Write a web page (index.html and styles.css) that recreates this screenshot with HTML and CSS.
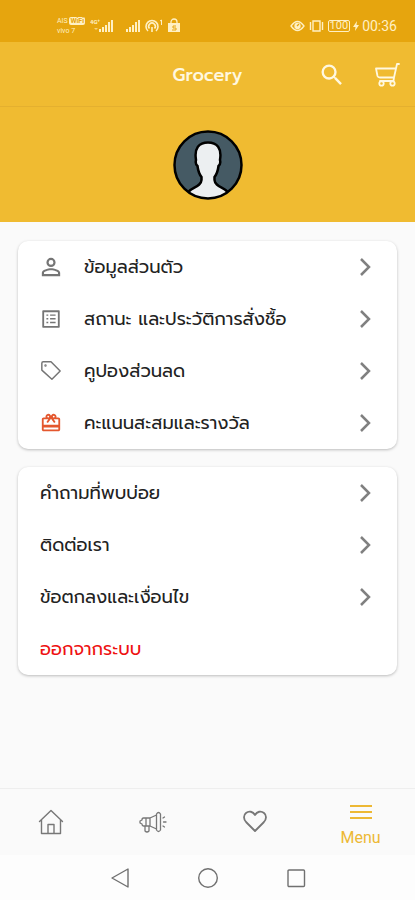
FILE: index.html
```html
<!DOCTYPE html>
<html lang="th">
<head>
<meta charset="utf-8">
<meta name="viewport" content="width=device-width, initial-scale=1">
<title>Grocery</title>
<link rel="stylesheet" href="styles.css">
</head>
<body>
<div class="screen">
  <div class="status">
    <div class="status-group">
      <span class="carrier"><span class="carrier-top">AIS <b class="wifi-tag">WiFi</b></span><span>vivo 7</span></span>
      <svg width="24" height="16" viewBox="0 0 24 16" fill="currentColor"><text x="0" y="6" class="net">4G⁺</text><path d="M4 10l2 2 2-2z" opacity=".6"/><path d="M9 11h2v3H9zM12 9h2v5h-2zM15 7h2v7h-2zM18 4h2v10h-2zM21 2h2v12h-2z"/></svg>
      <svg class="signal" width="16" height="16" viewBox="0 0 16 16" fill="currentColor"><path d="M1 11h2v3H1zM4 9h2v5H4zM7 7h2v7H7zM10 4h2v10h-2zM13 2h2v12h-2z"/></svg>
      <svg width="20" height="16" viewBox="0 0 20 16" fill="none" stroke="currentColor" stroke-width="1.6"><path d="M4 13a6 6 0 1 1 8 0M5.500 10.500a3.300 3.300 0 1 1 5 0M8 9v5"/><path d="M16 3l1.500-1v5" stroke-width="1"/></svg>
      <svg width="14" height="16" viewBox="0 0 14 16" fill="none"><path d="M1 5h12v9H1z" fill="currentColor"/><path d="M4 6V4a3 3 0 0 1 6 0v2" stroke="currentColor" stroke-width="1.300"/><path d="M9 8H6v2h3v2H5" stroke="#e6a50e"/></svg>
    </div>
    <div class="status-group">
      <svg width="15" height="16" viewBox="0 0 15 16" fill="none" stroke="currentColor" stroke-width="1.300"><path d="M1 8q6.500-9 13 0q-6.500 9-13 0z"/><circle cx="7.500" cy="8" r="2.500" fill="currentColor"/><path d="M7 8l2-2" stroke="#e6a50e"/></svg>
      <svg width="17" height="16" viewBox="0 0 17 16" fill="none" stroke="currentColor" stroke-width="1.400"><path d="M5 3h7v10H5zM2.500 4v8M14.500 4v8"/></svg>
      <span class="battery">100</span>
      <svg width="6" height="16" viewBox="0 0 6 16" fill="currentColor"><path d="M4 3L0 9h2.500L2 13l4-6H3.500z"/></svg>
      <span class="clock">00:36</span>
    </div>
  </div>

  <header class="appbar">
    <h1>Grocery</h1>
    <div class="actions">
      <button aria-label="Search"><svg width="28" height="28" viewBox="0 0 24 24" fill="currentColor"><path d="M15.500 14h-.79l-.28-.27A6.470 6.470 0 0 0 16 9.500 6.500 6.500 0 1 0 9.500 16c1.610 0 3.090-.59 4.230-1.570l.27.28v.79l5 4.990L20.490 19zm-6 0a4.500 4.500 0 1 1 0-9 4.500 4.500 0 0 1 0 9z"/></svg></button>
      <button aria-label="Cart"><svg width="28" height="28" viewBox="0 0 28 28" fill="none" stroke="currentColor" stroke-width="1.800" stroke-linecap="round" stroke-linejoin="round"><path d="M26 3h-2l-1 4.500H3L4.500 15Q5 16.500 7 16.500H21L23 7.500M21 16.500l-.5 3.500H7"/><circle cx="8.500" cy="22.500" r="2.200"/><circle cx="19.500" cy="22.500" r="2.200"/></svg></button>
    </div>
  </header>

  <section class="hero">
    <svg width="70" height="70" viewBox="0 0 70 70" role="img" aria-label="Profile"><defs><clipPath id="disc"><circle cx="35" cy="35" r="33"/></clipPath></defs><circle cx="35" cy="35" r="33" fill="#455a64"/><path clip-path="url(#disc)" d="M13 66C15 57 28 58 28.500 50V47C26 44 25 40 24.500 36Q22 34 23 30C21 18 26 12.500 35 12.500S49 18 47 30Q48 34 45.500 36C45 40 44 44 41.500 47V50C42 58 55 57 57 66V72H13z" fill="#eceff1" stroke="#000" stroke-width="2.500"/><circle cx="35" cy="35" r="33.500" fill="none" stroke="#000" stroke-width="2.500"/></svg>
  </section>

  <main class="content">
    <nav class="card" aria-label="Account">
      <a class="row" href="#"><svg class="lead" viewBox="0 0 24 24" fill="currentColor"><path d="M12 5.900a2.100 2.100 0 1 1 0 4.200 2.100 2.100 0 0 1 0-4.200m0 9c2.970 0 6.100 1.460 6.100 2.100v1.100H5.900V17c0-.64 3.130-2.100 6.100-2.100M12 4a4 4 0 1 0 0 8 4 4 0 0 0 0-8zm0 9c-2.670 0-8 1.340-8 4v3h16v-3c0-2.660-5.330-4-8-4z" transform="translate(-3 -3) scale(1.250)"/></svg><span>ข้อมูลส่วนตัว</span><svg class="chev" viewBox="0 0 12 18"><path d="M2 1l8 8-8 8"/></svg></a>
      <a class="row" href="#"><svg class="lead" viewBox="0 0 24 24" fill="currentColor"><path d="M19.500 4.500v15h-15v-15h15m1.100-2H3.400c-.5 0-.9.400-.9.900v17.200c0 .4.400.9.900.9h17.200c.4 0 .9-.5.900-.9V3.400c0-.5-.5-.9-.9-.9zM11 7h6v1.500h-6V7zm0 4h6v1.500h-6zm0 4h6v1.500h-6zM7 7h2v1.500H7zm0 4h2v1.500H7zm0 4h2v1.500H7z"/></svg><span>สถานะ และประวัติการสั่งชื้อ</span><svg class="chev" viewBox="0 0 12 18"><path d="M2 1l8 8-8 8"/></svg></a>
      <a class="row" href="#"><svg class="lead" viewBox="0 0 24 24" fill="none" stroke="currentColor" stroke-width="1.600" stroke-linejoin="round"><path d="M2 3.500Q2 2 3.500 2H12l10 10-9 9L2 11z"/><circle cx="6" cy="6" r=".5"/></svg><span>คูปองส่วนลด</span><svg class="chev" viewBox="0 0 12 18"><path d="M2 1l8 8-8 8"/></svg></a>
      <a class="row" href="#"><svg class="lead gift" viewBox="0 0 24 24" fill="currentColor"><path d="M20 6h-2.180c.11-.31.180-.65.180-1a3 3 0 0 0-5.500-1.650l-.5.670-.5-.68A3 3 0 0 0 6 5c0 .35.070.69.180 1H4c-1.110 0-1.990.89-1.990 2L2 19c0 1.110.89 2 2 2h16c1.110 0 2-.89 2-2V8c0-1.110-.89-2-2-2zm-5-2a1 1 0 1 1 0 2 1 1 0 0 1 0-2zM9 4a1 1 0 1 1 0 2 1 1 0 0 1 0-2zm11 15H4v-2h16v2zm0-5H4V8h5.080L7 10.830 8.620 12 12 7.400l3.380 4.600L17 10.830 14.920 8H20v6z"/></svg><span>คะแนนสะสมและรางวัล</span><svg class="chev" viewBox="0 0 12 18"><path d="M2 1l8 8-8 8"/></svg></a>
    </nav>
    <nav class="card" aria-label="Help">
      <a class="row" href="#"><span>คำถามที่พบบ่อย</span><svg class="chev" viewBox="0 0 12 18"><path d="M2 1l8 8-8 8"/></svg></a>
      <a class="row" href="#"><span>ติดต่อเรา</span><svg class="chev" viewBox="0 0 12 18"><path d="M2 1l8 8-8 8"/></svg></a>
      <a class="row" href="#"><span>ข้อตกลงและเงื่อนไข</span><svg class="chev" viewBox="0 0 12 18"><path d="M2 1l8 8-8 8"/></svg></a>
      <button class="row logout"><span>ออกจากระบบ</span></button>
    </nav>
  </main>

  <nav class="tabs" aria-label="Main">
    <a href="#" aria-label="Home"><svg width="28" height="28" viewBox="0 0 28 28" fill="none" stroke="currentColor" stroke-width="1.400" stroke-linejoin="round" stroke-linecap="round"><path d="M2.500 13.500L14 2.500l11.500 11M4.500 12v13.500h19V12M11 25V16.500h6V25"/></svg></a>
    <a href="#" aria-label="Promotions"><svg width="30" height="28" viewBox="0 0 30 28" fill="none" stroke="currentColor" stroke-width="1.300" stroke-linejoin="round" stroke-linecap="round"><path d="M18.500 7L12 10H5.500Q4 10 4 12L2 13v2l2 1Q4 18 5.500 18H12l6.500 3M12 10v8M8 10v8M7 18v5q2 2 4 0v-5M18.500 6q2-3 4 0v16q-2 3-4 0zM25 10l1.500-1M25.500 14H28M25 18l1.500 1"/></svg></a>
    <a href="#" aria-label="Favourites"><svg width="28" height="28" viewBox="0 0 28 28" fill="none" stroke="currentColor" stroke-width="1.800" stroke-linejoin="round"><path d="M14 23L5.500 14.500C2 11 2.500 7 5 5C8 2.500 12 3.500 14 7C16 3.500 20 2.500 23 5C25.500 7 26 11 22.500 14.500z"/></svg></a>
    <a href="#" class="active" aria-current="page"><svg width="22" height="16" viewBox="0 0 22 16" stroke="currentColor" stroke-width="2"><path d="M0 2h22M0 8h22M0 14h22"/></svg><span>Menu</span></a>
  </nav>

  <div class="system">
    <button aria-label="Back"><svg width="22" height="22" viewBox="0 0 22 22"><path d="M19 2v18L3 11z"/></svg></button>
    <button aria-label="Home screen"><svg width="22" height="22" viewBox="0 0 22 22"><circle cx="11" cy="11" r="9.300"/></svg></button>
    <button aria-label="Recent apps"><svg width="22" height="22" viewBox="0 0 22 22"><rect x="3" y="3" width="16.500" height="16.500" rx="1"/></svg></button>
  </div>
</div>
</body>
</html>
```
FILE: styles.css
```css
* { box-sizing: border-box; }
body {
  margin: 0;
  font-family: "Prompt", "Kanit", "Noto Sans Thai", "Noto Sans", sans-serif;
  background: #fafafa;
  color: #222;
}
button { border: 0; padding: 0; background: none; font: inherit; color: inherit; text-align: left; }
a { color: inherit; text-decoration: none; }
svg { display: block; flex: none; }

.screen { min-height: 100vh; display: flex; flex-direction: column; }

.status {
  height: 42px;
  padding: 10px 18px 0 57px;
  display: flex;
  justify-content: space-between;
  align-items: center;
  background: #e6a50e;
  color: #fff0c4;
}
.status-group { display: flex; align-items: center; gap: 3px; }
.carrier { display: flex; flex-direction: column; width: 30px; font: 7px/10px Roboto, sans-serif; white-space: nowrap; }
.wifi-tag { padding: 0 1px; border-radius: 2px; background: #fff0c4; color: #e6a50e; }
.net { font: bold 6px Roboto, sans-serif; }
.signal { margin-left: 8px; }
.battery { border: 1px solid; border-radius: 2px; padding: 0 1px; font: 11px/10px Roboto, sans-serif; }
.clock { font: 14px/16px Roboto, sans-serif; }

.appbar {
  height: 65px;
  padding: 2px 14px 0;
  display: grid;
  grid-template-columns: 1fr auto 1fr;
  align-items: center;
  background: #f0bb31;
  border-bottom: 1px solid #e4b02f;
  color: #fff8e0;
}
.appbar h1 { grid-column: 2; margin: 0; font-weight: 500; font-size: 18px; line-height: 28px; }
.actions { display: flex; justify-content: flex-end; gap: 27px; }

.hero { height: 115px; display: grid; place-items: center; background: #f0bb31; }

.content { flex: 1; padding: 19px 18px; display: flex; flex-direction: column; gap: 18px; }
.card { border-radius: 10px; background: #fff; box-shadow: 0 1px 3px rgba(0, 0, 0, .25); }
.row { height: 52px; width: 100%; padding: 0 26px 0 22px; display: flex; align-items: center; font-size: 18px; line-height: 28px; }
.row span { flex: 1; }
.lead { width: 22px; height: 22px; margin-right: 22px; color: #757575; }
.gift { color: #e4572e; }
.chev { width: 12px; height: 18px; fill: none; stroke: #808080; stroke-width: 2.5; }
.logout { color: #ee1111; }

.tabs { height: 67px; display: grid; grid-template-columns: 102fr 102fr 102fr 109fr; border-top: 1px solid #eee; color: #777; }
.tabs a { display: flex; flex-direction: column; align-items: center; justify-content: center; }
.tabs .active { padding-top: 8px; gap: 8px; color: #edb834; font: 16px/20px Roboto, sans-serif; }

.system { height: 45px; display: flex; justify-content: center; align-items: center; gap: 66px; background: #fdfdfd; }
.system svg { fill: none; stroke: #707070; stroke-width: 1.4; stroke-linejoin: round; }
```
